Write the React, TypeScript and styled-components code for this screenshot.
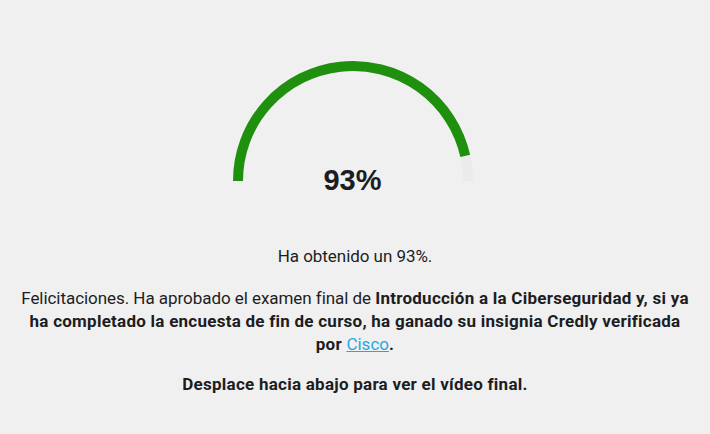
import React from "react";
import styled, { createGlobalStyle } from "styled-components";

const GlobalStyle = createGlobalStyle`
  html, body {
    margin: 0;
    padding: 0;
    background: #f0f0f0;
  }
  body {
    font-family: Roboto, "Liberation Sans", Arial, sans-serif;
    color: #1d1d1f;
  }
`;

const Page = styled.div`
  width: 710px;
  height: 434px;
  display: flex;
  flex-direction: column;
  align-items: center;
  padding-top: 56px;
  box-sizing: border-box;
`;

const Gauge = styled.div`
  position: relative;
  width: 250px;
  height: 140px;
  margin-right: 5px;
`;

const Score = styled.div`
  position: absolute;
  left: 0;
  right: 0;
  top: 108px;
  text-align: center;
  font-family: "Liberation Sans", Arial, sans-serif;
  font-weight: bold;
  font-size: 29px;
  color: #1d1d1f;
`;

const Result = styled.p`
  margin: 49px 0 0;
  font-size: 17px;
  line-height: 23px;
  letter-spacing: -0.05px;
  text-align: center;
`;

const Message = styled.p<{ $gap: number }>`
  margin: ${(p) => p.$gap}px 0 0;
  width: 670px;
  font-size: 17px;
  line-height: 23px;
  letter-spacing: -0.05px;
  text-align: center;
`;

const Strong = styled.strong`
  font-weight: 700;
  letter-spacing: 0.25px;
`;

const Link = styled.a`
  color: #1fa9e1;
  text-decoration: underline;
  font-weight: 400;
  letter-spacing: 0;
`;

const percent = 93;

const ScoreGauge = ({ value }: { value: number }): JSX.Element => {
  const cx = 125;
  const cy = 125;
  const r = 115;
  const angle = Math.PI * (1 - value / 100);
  const ex = cx + r * Math.cos(angle);
  const ey = cy - r * Math.sin(angle);
  return (
    <Gauge>
      <svg width="250" height="140" viewBox="0 0 250 140">
        <path
          d={`M ${cx - r} ${cy} A ${r} ${r} 0 0 1 ${cx + r} ${cy}`}
          fill="none"
          stroke="#ebebeb"
          strokeWidth="10"
        />
        <path
          d={`M ${cx - r} ${cy} A ${r} ${r} 0 0 1 ${ex} ${ey}`}
          fill="none"
          stroke="#1f8f0e"
          strokeWidth="10"
        />
      </svg>
      <Score>{value}%</Score>
    </Gauge>
  );
};

const App = (): JSX.Element => {
  return (
    <>
      <GlobalStyle />
      <Page>
        <ScoreGauge value={percent} />
        <Result>Ha obtenido un {percent}%.</Result>
        <Message $gap={19}>
          Felicitaciones. Ha aprobado el examen final de{" "}
          <Strong>
            Introducción a la Ciberseguridad y, si ya ha completado la encuesta
            de fin de curso, ha ganado su insignia Credly verificada por{" "}
            <Link href="#">Cisco</Link>.
          </Strong>
        </Message>
        <Message $gap={17}>
          <Strong>Desplace hacia abajo para ver el vídeo final.</Strong>
        </Message>
      </Page>
    </>
  );
};

export default App;
